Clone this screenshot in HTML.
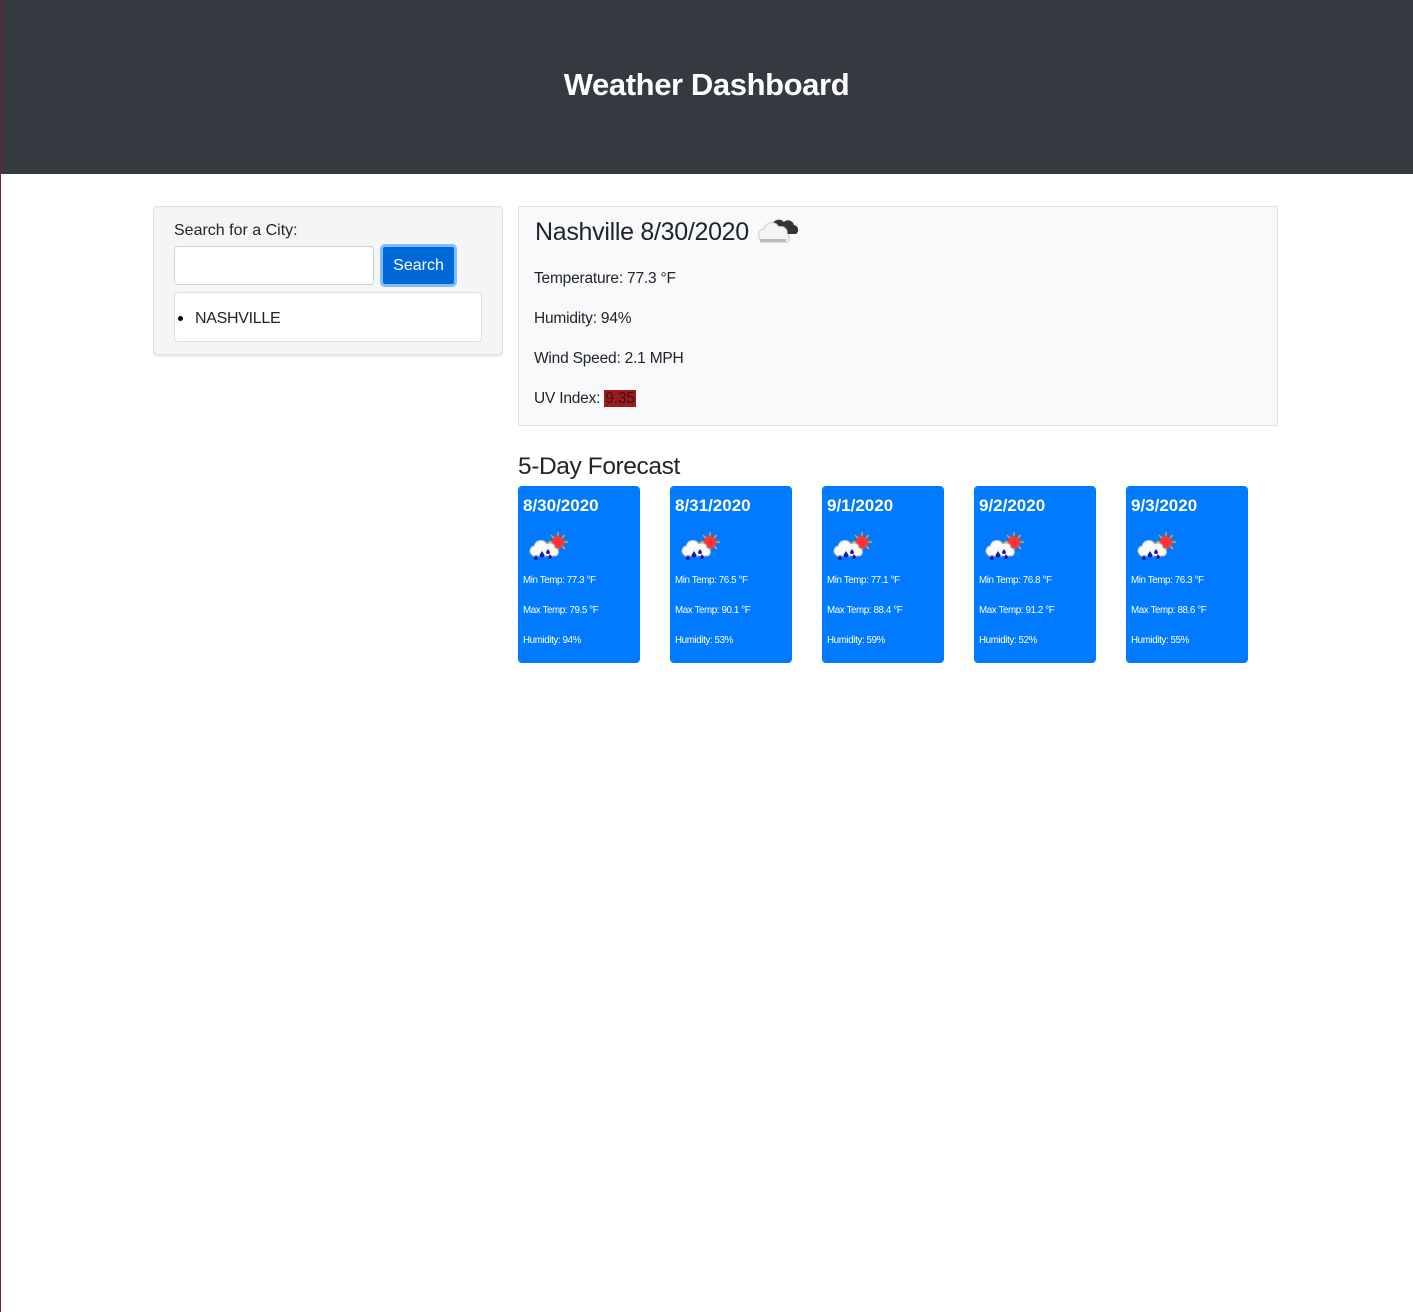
<!DOCTYPE html>
<html><head><meta charset="utf-8"><style>
*{box-sizing:border-box;margin:0;padding:0}
body{width:1413px;height:1312px;background:#fff;font-family:"Liberation Sans",sans-serif;color:#212529;position:relative;overflow:hidden}
.edge{position:absolute;left:0;top:0;width:1px;height:1312px;background:#7a1f3a}
.hdr{position:absolute;left:0;top:0;width:1413px;height:174px;background:#343a40}
.hdr h1{position:absolute;left:0;width:1413px;top:67px;text-align:center;color:#fff;font-size:31px;font-weight:bold;letter-spacing:-0.4px}
.sp{position:absolute;left:153px;top:206px;width:350px;height:149px;background:#f5f5f5;border:1px solid #e0e0e0;border-radius:4px;box-shadow:0 2px 1px rgba(0,0,0,.08)}
.lbl{position:absolute;left:20px;top:15px;font-size:16px;color:#212529}
.inp{position:absolute;left:20px;top:39px;width:200px;height:39px;background:#fff;border:1px solid #ced4da;border-radius:4px}
.btn{position:absolute;left:226px;top:37px;width:77px;height:43px;background:#0069d9;border:3px solid #80bdff;border-radius:5px;color:#fff;font-size:16px;text-align:center;line-height:38px}
.list{position:absolute;left:20px;top:85px;width:308px;height:50px;background:#fff;border:1px solid #ddd;border-radius:4px;font-size:16px}
.list span{position:absolute;left:20px;top:17px;letter-spacing:-0.3px}
.list i{position:absolute;left:3px;top:23px;width:5px;height:5px;border-radius:50%;background:#000}
.cur{position:absolute;left:518px;top:206px;width:760px;height:220px;background:#f8f9fa;border:1px solid #dee2e6}
.cur h2{position:absolute;left:16px;top:8px;font-size:25px;font-weight:normal;letter-spacing:-0.3px}
.cur p{position:absolute;left:15px;font-size:15.5px;letter-spacing:-0.2px}
.uv{background:#9b1c1c;color:#3a1111;padding:0 1px}
.fh{position:absolute;left:518px;top:453px;font-size:24.5px;letter-spacing:-0.4px}
.card{position:absolute;top:486px;width:122px;height:177px;background:#007bff;border-radius:4px;color:#fff}
.card h5{position:absolute;left:5px;top:10px;font-size:17px;font-weight:bold}
.card svg{position:absolute;left:10px;top:46px}
.card p{position:absolute;left:5px;font-size:9.8px;letter-spacing:-0.4px}
</style></head><body>
<div class="hdr"><h1>Weather Dashboard</h1></div>
<div class="edge"></div>
<div class="sp">
<div class="lbl">Search for a City:</div>
<div class="inp"></div>
<div class="btn">Search</div>
<div class="list"><i></i><span>NASHVILLE</span></div>
</div>
<div class="cur">
<h2>Nashville 8/30/2020 <svg width="44" height="28" viewBox="0 0 44 28" style="vertical-align:-3px"><path d="M16 10a7 7 0 0 1 12-3a6 6 0 0 1 10 3a5 5 0 0 1 2 9H22z" fill="#333"/><path d="M4 24a6 6 0 0 1 4-10a8 8 0 0 1 15-2a6 6 0 0 1 8 7a5 5 0 0 1-1 9H6a4 4 0 0 1-2-4z" fill="#f4f4f4" stroke="#ccc" stroke-width="1"/><rect x="4" y="24" width="26" height="3" fill="#bbb"/></svg></h2>
<p style="top:63px">Temperature: 77.3 °F</p>
<p style="top:103px">Humidity: 94%</p>
<p style="top:143px">Wind Speed: 2.1 MPH</p>
<p style="top:183px">UV Index: <span class="uv">9.35</span></p>
</div>
<div class="fh">5-Day Forecast</div>

<div class="card" style="left:518px"><h5>8/30/2020</h5><svg width="40" height="30" viewBox="0 0 40 30"><g stroke="#f90" stroke-width="1.5"><line x1="30" y1="0" x2="30" y2="20"/><line x1="20" y1="10" x2="40" y2="10"/><line x1="23" y1="3" x2="37" y2="17"/><line x1="37" y1="3" x2="23" y2="17"/></g><circle cx="30" cy="10" r="6" fill="#f33"/><path d="M3 22a5 5 0 0 1 3-8a7 7 0 0 1 13-2a5 5 0 0 1 8 4a4 4 0 0 1-1 8H5z" fill="#fafafa" stroke="#bbb"/><g fill="#1a1aa8"><path d="M8 23l-2 3a2 2 0 1 0 4 0z"/><path d="M14 19l-2.5 4a2.5 2.5 0 1 0 5 0z"/><path d="M20 17l-2 3a2 2 0 1 0 4 0z"/><path d="M22 22l-2 3a2 2 0 1 0 4 0z"/></g></svg><p style="top:89px">Min Temp: 77.3 °F</p><p style="top:119px">Max Temp: 79.5 °F</p><p style="top:149px">Humidity: 94%</p></div>

<div class="card" style="left:670px"><h5>8/31/2020</h5><svg width="40" height="30" viewBox="0 0 40 30"><g stroke="#f90" stroke-width="1.5"><line x1="30" y1="0" x2="30" y2="20"/><line x1="20" y1="10" x2="40" y2="10"/><line x1="23" y1="3" x2="37" y2="17"/><line x1="37" y1="3" x2="23" y2="17"/></g><circle cx="30" cy="10" r="6" fill="#f33"/><path d="M3 22a5 5 0 0 1 3-8a7 7 0 0 1 13-2a5 5 0 0 1 8 4a4 4 0 0 1-1 8H5z" fill="#fafafa" stroke="#bbb"/><g fill="#1a1aa8"><path d="M8 23l-2 3a2 2 0 1 0 4 0z"/><path d="M14 19l-2.5 4a2.5 2.5 0 1 0 5 0z"/><path d="M20 17l-2 3a2 2 0 1 0 4 0z"/><path d="M22 22l-2 3a2 2 0 1 0 4 0z"/></g></svg><p style="top:89px">Min Temp: 76.5 °F</p><p style="top:119px">Max Temp: 90.1 °F</p><p style="top:149px">Humidity: 53%</p></div>

<div class="card" style="left:822px"><h5>9/1/2020</h5><svg width="40" height="30" viewBox="0 0 40 30"><g stroke="#f90" stroke-width="1.5"><line x1="30" y1="0" x2="30" y2="20"/><line x1="20" y1="10" x2="40" y2="10"/><line x1="23" y1="3" x2="37" y2="17"/><line x1="37" y1="3" x2="23" y2="17"/></g><circle cx="30" cy="10" r="6" fill="#f33"/><path d="M3 22a5 5 0 0 1 3-8a7 7 0 0 1 13-2a5 5 0 0 1 8 4a4 4 0 0 1-1 8H5z" fill="#fafafa" stroke="#bbb"/><g fill="#1a1aa8"><path d="M8 23l-2 3a2 2 0 1 0 4 0z"/><path d="M14 19l-2.5 4a2.5 2.5 0 1 0 5 0z"/><path d="M20 17l-2 3a2 2 0 1 0 4 0z"/><path d="M22 22l-2 3a2 2 0 1 0 4 0z"/></g></svg><p style="top:89px">Min Temp: 77.1 °F</p><p style="top:119px">Max Temp: 88.4 °F</p><p style="top:149px">Humidity: 59%</p></div>

<div class="card" style="left:974px"><h5>9/2/2020</h5><svg width="40" height="30" viewBox="0 0 40 30"><g stroke="#f90" stroke-width="1.5"><line x1="30" y1="0" x2="30" y2="20"/><line x1="20" y1="10" x2="40" y2="10"/><line x1="23" y1="3" x2="37" y2="17"/><line x1="37" y1="3" x2="23" y2="17"/></g><circle cx="30" cy="10" r="6" fill="#f33"/><path d="M3 22a5 5 0 0 1 3-8a7 7 0 0 1 13-2a5 5 0 0 1 8 4a4 4 0 0 1-1 8H5z" fill="#fafafa" stroke="#bbb"/><g fill="#1a1aa8"><path d="M8 23l-2 3a2 2 0 1 0 4 0z"/><path d="M14 19l-2.5 4a2.5 2.5 0 1 0 5 0z"/><path d="M20 17l-2 3a2 2 0 1 0 4 0z"/><path d="M22 22l-2 3a2 2 0 1 0 4 0z"/></g></svg><p style="top:89px">Min Temp: 76.8 °F</p><p style="top:119px">Max Temp: 91.2 °F</p><p style="top:149px">Humidity: 52%</p></div>

<div class="card" style="left:1126px"><h5>9/3/2020</h5><svg width="40" height="30" viewBox="0 0 40 30"><g stroke="#f90" stroke-width="1.5"><line x1="30" y1="0" x2="30" y2="20"/><line x1="20" y1="10" x2="40" y2="10"/><line x1="23" y1="3" x2="37" y2="17"/><line x1="37" y1="3" x2="23" y2="17"/></g><circle cx="30" cy="10" r="6" fill="#f33"/><path d="M3 22a5 5 0 0 1 3-8a7 7 0 0 1 13-2a5 5 0 0 1 8 4a4 4 0 0 1-1 8H5z" fill="#fafafa" stroke="#bbb"/><g fill="#1a1aa8"><path d="M8 23l-2 3a2 2 0 1 0 4 0z"/><path d="M14 19l-2.5 4a2.5 2.5 0 1 0 5 0z"/><path d="M20 17l-2 3a2 2 0 1 0 4 0z"/><path d="M22 22l-2 3a2 2 0 1 0 4 0z"/></g></svg><p style="top:89px">Min Temp: 76.3 °F</p><p style="top:119px">Max Temp: 88.6 °F</p><p style="top:149px">Humidity: 55%</p></div>
</body></html>
